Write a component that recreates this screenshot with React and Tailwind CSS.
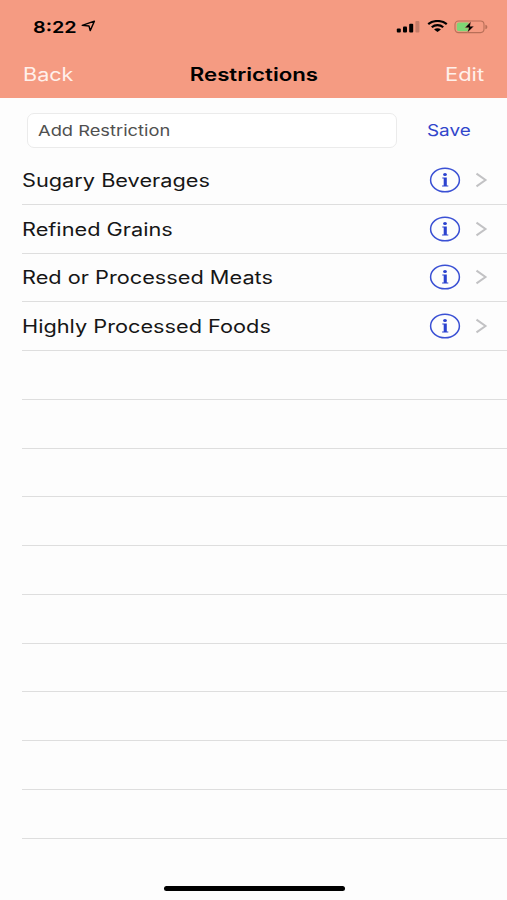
const items = ['Sugary Beverages', 'Refined Grains', 'Red or Processed Meats', 'Highly Processed Foods'];
const emptyRows = Array.from({ length: 10 }, (_, i) => i);

function StatusBar() {
  return (
    <div className="flex h-[52px] items-center justify-between pr-[19px] pl-[33px]">
      <div className="flex items-center pt-px">
        <span className="w-[48px] origin-left scale-x-[1.2] text-[16.5px] leading-5 font-semibold whitespace-nowrap">8:22</span>
        <svg className="-mt-px h-3 w-[15px]" viewBox="0 0 15 12" fill="none" stroke="currentColor" strokeWidth="1.4" strokeLinejoin="round">
          <path d="M1.2 5.4 13.4 1.2 9.2 10.6 8 6Z" />
        </svg>
      </div>
      <div className="flex items-center pt-px">
        <svg className="h-3 w-[24px]" viewBox="0 0 24 12" fill="currentColor">
          <rect x="0.8" y="7.6" width="4" height="4" rx="1" />
          <rect x="7" y="5.4" width="4" height="6.2" rx="1" />
          <rect x="13.2" y="2.8" width="4" height="8.8" rx="1" />
          <rect x="19.4" y="0" width="4" height="11.6" rx="1" opacity="0.2" />
        </svg>
        <svg className="-mt-px ml-[7px] h-[12px] w-[21px]" viewBox="0 0 22 13" preserveAspectRatio="none" fill="none" stroke="currentColor" strokeWidth="2.3">
          <path d="M1.3 4.5C6.5-.1 15.5-.1 20.7 4.5" />
          <path d="M5 7.8c3.4-3 8.6-3 12 0" />
          <path d="M11 12.9 7.4 10.2c2-1.8 5.2-1.8 7.2 0Z" fill="currentColor" stroke="none" />
        </svg>
        <svg className="ml-[6px] h-[14px] w-[34px]" viewBox="0 0 34 14">
          <rect x="1" y="1" width="29" height="11.6" rx="3.5" fill="none" stroke="#b86f58" strokeWidth="1.1" />
          <path d="M5 2.4h9.5v8.8H5Q2.8 11.2 2.8 9.2v-4.8Q2.8 2.4 5 2.4Z" fill="#7dd675" />
          <path d="M31.4 4.8q2 .5 2 2.2t-2 2.2Z" fill="#b86f58" />
          <path d="M17 1.5 10.8 7.7h4l-1.3 4.8 6.5-6.3h-4Z" fill="#000" stroke="#f59b82" strokeWidth=".4" />
        </svg>
      </div>
    </div>
  );
}

function Row({ label }) {
  return (
    <div className="ml-[22px] flex h-[48.77px] items-center border-b border-[#dedede] pr-[19px]">
      {label && (
        <>
          <span className="origin-left scale-x-[1.207] pt-[2px] text-[18px] leading-6 whitespace-nowrap text-[#161616]">{label}</span>
          <svg className="ml-auto h-[26px] w-[32px] shrink-0" viewBox="0 0 32 26">
            <ellipse cx="16" cy="13" rx="14.4" ry="11.8" fill="none" stroke="#3a50d4" strokeWidth="1.5" />
            <ellipse cx="16" cy="7.4" rx="1.9" ry="1.5" fill="#2b42cf" />
            <path d="M13.3 10.4h4.5v8h1.5v1.2h-6.2v-1.2h1.6v-6.9h-1.4Z" fill="#2b42cf" />
          </svg>
          <svg className="ml-[14px] h-[16px] w-[13px] shrink-0" viewBox="0 0 13 16" fill="none" stroke="#c2c2c4" strokeWidth="2">
            <path d="m1.5 1.6 9 6.4-9 6.4" />
          </svg>
        </>
      )}
    </div>
  );
}

export default function App() {
  return (
    <div className="flex h-[900px] w-[507px] flex-col overflow-hidden bg-[#fdfdfd] font-['Inter','Liberation_Sans',sans-serif] text-black">
      <header className="h-[98px] shrink-0 bg-[#f59b82]">
        <StatusBar />
        <nav className="grid h-[44px] grid-cols-3 items-center px-[23px] text-[18px]">
          <span className="origin-left scale-x-[1.2] justify-self-start text-[#fff0eb]">Back</span>
          <span className="scale-x-[1.235] justify-self-center font-semibold">Restrictions</span>
          <span className="origin-right scale-x-[1.22] justify-self-end text-[#fff0eb]">Edit</span>
        </nav>
      </header>
      <div className="flex h-[58px] shrink-0 items-center pt-[7px] pl-[27px]">
        <div className="flex h-[35px] w-[370px] items-center rounded-[7px] border border-[#ebebeb] bg-white pl-[10px]">
          <span className="origin-left scale-x-[1.22] pt-px text-[15px] whitespace-nowrap text-[#505050]">Add Restriction</span>
        </div>
        <span className="ml-[30px] origin-left scale-x-[1.18] pb-px text-[16px] text-[#3146cb]">Save</span>
      </div>
      <main>
        {items.map((label) => <Row key={label} label={label} />)}
        {emptyRows.map((i) => <Row key={i} />)}
      </main>
      <div className="mt-[47px] ml-[164px] h-[5px] w-[181px] shrink-0 rounded-full bg-black" />
    </div>
  );
}
